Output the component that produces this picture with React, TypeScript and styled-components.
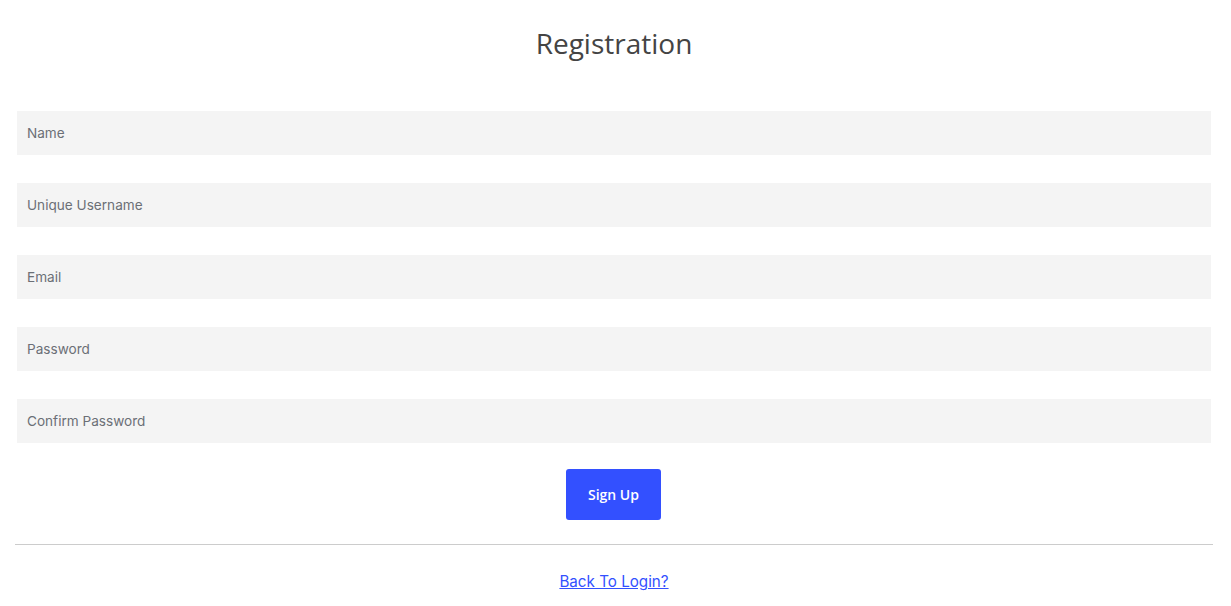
import styled, { createGlobalStyle } from "styled-components";

const GlobalStyle = createGlobalStyle`
  body {
    margin: 0;
    background: #ffffff;
    font-family: "Open Sans", sans-serif;
  }
`;

const Page = styled.div`
  padding: 0 18px 0 15px;
`;

const Title = styled.h1`
  margin: 0;
  padding-top: 24px;
  height: 111px;
  box-sizing: border-box;
  text-align: center;
  font-family: "Open Sans", sans-serif;
  font-weight: 400;
  font-size: 28px;
  line-height: 38px;
  color: #444444;
`;

const Form = styled.form`
  display: flex;
  flex-direction: column;
  gap: 28px;
  padding: 0 2px;
`;

const Field = styled.input`
  height: 44px;
  border: 0;
  outline: none;
  background: #f4f4f4;
  padding: 0 10px;
  font-family: Inter, sans-serif;
  font-size: 13.6px;
  color: #333;
  &::placeholder {
    color: #6b6f76;
  }
`;

const Actions = styled.div`
  display: flex;
  justify-content: center;
  margin-top: -2px;
  padding-right: 1px;
`;

const Button = styled.button`
  width: 95px;
  height: 51px;
  border: 0;
  border-radius: 3px;
  background: #3350ff;
  color: #ffffff;
  font-family: "Open Sans", sans-serif;
  font-weight: 600;
  font-size: 14px;
  cursor: pointer;
`;

const Divider = styled.hr`
  margin: 24px 0 0;
  border: 0;
  border-top: 1px solid #cccccc;
`;

const Footer = styled.p`
  margin: 27px 0 0;
  text-align: center;
  font-family: Inter, sans-serif;
  font-size: 15.2px;
  line-height: 20px;
  a {
    color: #3350ff;
    text-decoration: underline;
  }
`;

export default function App() {
  return (
    <>
      <GlobalStyle />
      <Page>
        <Title>Registration</Title>
        <Form onSubmit={(e) => e.preventDefault()}>
          <Field type="text" placeholder="Name" />
          <Field type="text" placeholder="Unique Username" />
          <Field type="email" placeholder="Email" />
          <Field type="password" placeholder="Password" />
          <Field type="password" placeholder="Confirm Password" />
          <Actions>
            <Button type="submit">Sign Up</Button>
          </Actions>
        </Form>
        <Divider />
        <Footer>
          <a href="#">Back To Login?</a>
        </Footer>
      </Page>
    </>
  );
}
